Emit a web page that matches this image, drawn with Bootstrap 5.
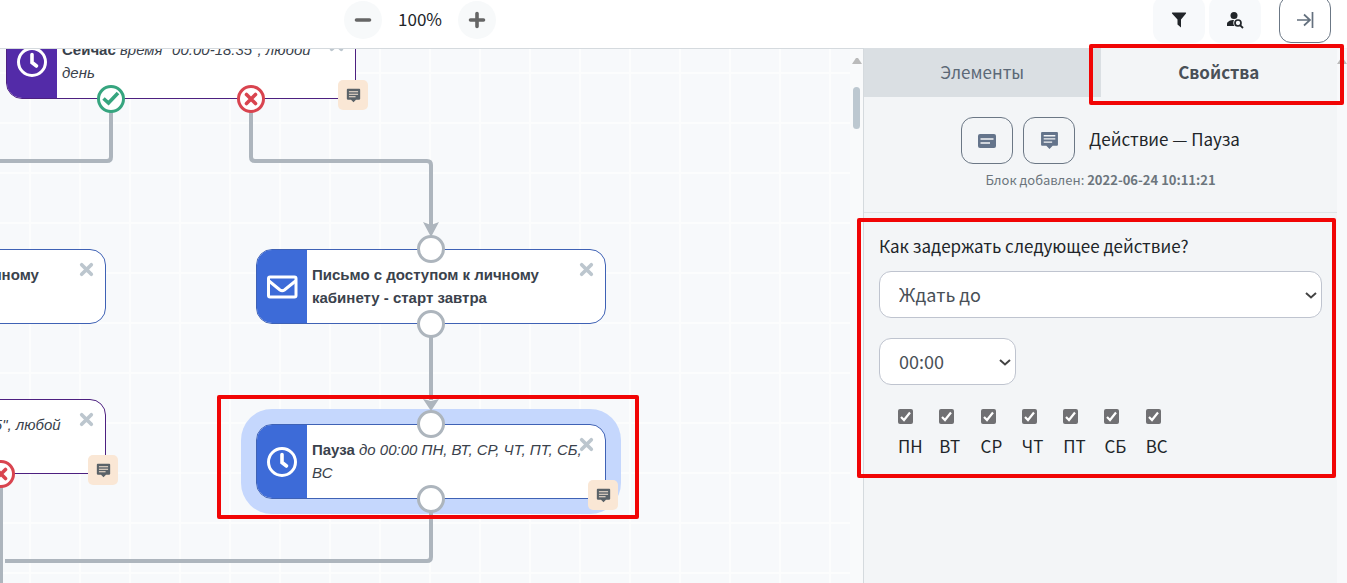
<!DOCTYPE html>
<html lang="ru">
<head>
<meta charset="utf-8">
<meta name="viewport" content="width=device-width, initial-scale=1">
<title>Редактор процесса</title>
<link rel="stylesheet" href="https://cdn.jsdelivr.net/npm/bootstrap@5.3.0/dist/css/bootstrap.min.css">
<style>
  body { font-family: "Noto Sans CJK SC", "Noto Sans", sans-serif; color: #212529; font-size: 17px; line-height: 24px; }
  .top-bar { height: 49px; padding-bottom: 9px; border-bottom: 1px solid #d5dade; flex: none; }
  .zoom-group { width: calc(100% - 507px); gap: 16px; }
  .zoom-btn { width: 38px; height: 38px; border-radius: 50%; background: #f7f9fa; border: 0; padding: 0; flex: none; }
  .zoom-value { padding-bottom: 2px; }
  .tool-btn { width: 52px; height: 47px; border-radius: 12px; padding: 0; flex: none; }
  .tool-soft { background: #f7f9fb; border: 0; }
  .tool-line { background: transparent; border: 1px solid #6b7785; }
  .tool-gap { margin-left: 14px; }
  button svg, .node svg { display: block; margin: auto; }

  .board { background-color: #f7f9fb; min-width: 0; }
  .board-grid { inset: 0 12px 0 0;
    background-image: linear-gradient(#fcfdfd 2px, transparent 2px), linear-gradient(90deg, #fcfdfd 2px, transparent 2px);
    background-size: 50px 50px; background-position: 29px 23px; }
  .wires { left: 0; top: 0; }
  .node { position: absolute; width: 350px; height: 75px; border: 1px solid #3f62b5; border-radius: 16px; background: #fff;
    font: 15px/23px "Liberation Sans", Arial, sans-serif; color: #3a424c; }
  .node-icon { width: 50px; flex: none; background: #3d6bd8; border-radius: 15px 0 0 15px; }
  .node-text { padding: 13px 0 0 5px; width: 276px; }
  .node-time { border-color: #4d2080; }
  .node-time .node-icon { background: #532ba8; }
  .node-active { box-shadow: 0 0 0 15px #c5d7fd; }
  .at-now { left: 6px; top: -25px; }
  .at-mail { left: 256px; top: 200px; }
  .at-pause { left: 256px; top: 375px; }
  .at-mail-left { left: -244px; top: 200px; }
  .at-now-left { left: -244px; top: 350px; }
  .node-close { position: absolute; right: 11px; top: 12px; border: 0; background: none; padding: 0; }
  .node-note { position: absolute; right: -13px; bottom: -12px; width: 30px; height: 30px; padding: 0; border: 0; border-radius: 5px; background: #fae7d5; z-index: 1; }
  .port { position: absolute; width: 28px; height: 28px; border: 3px solid #adb5bd; border-radius: 50%; background: #fff; }
  .port-in { left: 160px; top: -15px; }
  .port-out { left: 160px; bottom: -15px; }
  .port-yes { left: 90px; bottom: -15px; border-color: #36a57f; }
  .port-no { left: 230px; bottom: -15px; border-color: #d9444f; }
  .over-ports { width: 350px; height: 75px; border: 1px solid transparent; }
  .frame { position: absolute; border: 4px solid #f10505; border-radius: 2px; pointer-events: none; z-index: 3; }
  .frame-node { left: 217px; top: 346px; width: 422px; height: 124px; }
  .frame-tab { left: -12px; right: -7px; top: -4px; bottom: -8px; }
  .frame-form { left: -7px; right: 1px; top: 5px; bottom: 0; }
  .track { width: 13px; right: 0; top: 0; bottom: 0; background: #f9fafb; }
  .thumb { width: 7px; height: 42px; border-radius: 4px; background: #bdc8d0; margin: 23px auto 0; }
  .arrow-up { width: 10px; margin: 8px auto 0; display: block; }

  .side { width: 484px; flex: none; background: #f3f5f7; border-left: 1px solid #d5dade; padding-right: 10px; margin-top: -1px; }
  .side-track { position: absolute; right: 0; top: 1px; bottom: 0; width: 10px; background: #f8f9fb; }
  .side-tab { height: 49px; border: 0; background: none; color: #5c6977; font-size: 17px; padding: 0 0 2px; width: 100%; }
  .side-tab-off { background: #dadfe3; }
  .side-tab-on { font-weight: 700; color: #495057; }
  .block-head { padding: 20px 0 22px; border-bottom: 1px solid #e0e4e7; }
  .block-tools { gap: 10px; }
  .block-name { padding: 0 0 4px 4px; }
  .block-date { font-size: 13px; line-height: 20px; color: #6c757d; margin-top: 6px; }
  .block-form { padding: 21px 15px 20px; }
  .field-label { margin-bottom: 13px; }
  .field { height: 47px; border: 1px solid #bfc4cf; border-radius: 12px; padding: 0 30px 0 19px; color: #495057; font-size: 18px;
    background-position: right 3px center; background-size: 14px 14px;
    background-image: url("data:image/svg+xml,%3Csvg xmlns='http://www.w3.org/2000/svg' viewBox='0 0 14 14'%3E%3Cpath d='M2 5l5 4.500 5-4.500' fill='none' stroke='%23444' stroke-width='2'/%3E%3C/svg%3E"); }
  .field-time { width: 137px; margin-top: 20px; }
  .days { width: 289px; margin-left: 19px; grid-template-columns: repeat(7, 1fr); }
  .days label { margin-top: 10px; }
  .days .form-check-input { width: 15px; height: 15px; margin: 0; border-radius: 2px; display: block; border: 0; }
  .days .form-check-input:checked { background-color: #707073;
    background-image: url("data:image/svg+xml,%3Csvg xmlns='http://www.w3.org/2000/svg' viewBox='0 0 15 15'%3E%3Cpath d='M3 8l3 3 6-7.500' fill='none' stroke='%23fff' stroke-width='2.200'/%3E%3C/svg%3E"); }
</style>
</head>
<body>
<svg class="d-none">
  <symbol id="i-note" viewBox="0 0 18 18"><path fill="currentColor" d="M2 1h14a1 1 0 0 1 1 1v11a1 1 0 0 1-1 1h-4l-3 3-3-3H2a1 1 0 0 1-1-1V2a1 1 0 0 1 1-1z"/><path d="M3.500 4.500h11M3.500 7.500h11M3.500 10.500h8" stroke="var(--hole)" stroke-width="1.300"/></symbol>
  <symbol id="i-x" viewBox="0 0 14 14"><path d="M2.500 2.500l9 9M11.500 2.500l-9 9" stroke="currentColor" stroke-width="3.400" stroke-linecap="round"/></symbol>
  <symbol id="i-clock" viewBox="0 0 32 32"><circle cx="16" cy="16" r="13.500" fill="none" stroke="#fff" stroke-width="3"/><path d="M16 8.500v8l4.500 3.500" fill="none" stroke="#fff" stroke-width="3.600" stroke-linecap="round"/></symbol>
  <symbol id="i-mail" viewBox="0 0 32 24"><rect x="2.500" y="2" width="27.500" height="20" rx="1.500" fill="none" stroke="#fff" stroke-width="3"/><path d="M3 6l11 9q2.200 1.600 4.400 0L29.500 6" fill="none" stroke="#fff" stroke-width="3"/></symbol>
</svg>

<div class="vh-100 d-flex flex-column overflow-hidden">
  <header class="top-bar d-flex align-items-center justify-content-between bg-white overflow-hidden">
    <div class="zoom-group d-flex align-items-center justify-content-center">
      <button class="zoom-btn" type="button" aria-label="Уменьшить"><svg width="18" height="18"><path d="M2.500 9h13" stroke="#666" stroke-width="3.600" stroke-linecap="round"/></svg></button>
      <span class="zoom-value">100%</span>
      <button class="zoom-btn" type="button" aria-label="Увеличить"><svg width="18" height="18"><path d="M2.500 9h13M9 2.500v13" stroke="#666" stroke-width="3.600" stroke-linecap="round"/></svg></button>
    </div>
    <div class="d-flex gap-1 pe-3">
      <button class="tool-btn tool-soft" type="button" aria-label="Фильтр"><svg width="16" height="18"><path d="M1.500 1.500h13q1 0 .5 1L10 8.500v8L6.500 13.500v-5L1 2.500q-.5-1 .5-1z" fill="#212529"/></svg></button>
      <button class="tool-btn tool-soft" type="button" aria-label="Поиск контакта"><svg width="18" height="18"><circle cx="8" cy="4.500" r="3.500" fill="#212529"/><path d="M1 15v-2c0-2.500 3.500-4 7-4-1 2-1 4.500.5 6z" fill="#212529"/><circle cx="12" cy="12" r="3" fill="none" stroke="#212529" stroke-width="1.700"/><path d="M14.300 14.300l2.700 2.700" stroke="#212529" stroke-width="1.800"/></svg></button>
      <button class="tool-btn tool-line tool-gap" type="button" aria-label="Свернуть панель"><svg width="18" height="18"><path d="M1 9h13M8 3.500L14 9l-6 5.500M16.500 1v16" fill="none" stroke="#64707e" stroke-width="1.700"/></svg></button>
    </div>
  </header>

  <div class="d-flex flex-grow-1">
    <main class="board position-relative flex-grow-1">
      <div class="position-absolute w-100 h-100 overflow-hidden">
        <div class="board-grid position-absolute"></div>
        <div class="node node-active at-pause d-flex">
          <div class="node-icon d-flex"><svg width="32" height="32"><use href="#i-clock"/></svg></div>
          <div class="node-text"><b>Пауза</b> <i>до 00:00 ПН, ВТ, СР, ЧТ, ПТ, СБ, ВС</i></div>
          <button class="node-close" type="button" aria-label="Удалить"><svg width="15" height="15" color="#bcc6ce"><use href="#i-x"/></svg></button>
          <button class="node-note" type="button" aria-label="Заметка"><svg width="15" height="15" color="#5a6268" style="--hole:#fae7d5"><use href="#i-note"/></svg></button>
        </div>
        <svg class="wires position-absolute" width="851" height="534" fill="none" stroke="#adb5bd" stroke-width="4">
          <path d="M111 60v48q0 4-4 4H-4M251 60v48q0 4 4 4h172q4 0 4 4v66M431 275v76M431 460v48q0 4-4 4H5M1 430v110"/>
          <g fill="#adb5bd" stroke="none"><path d="M423 173l8 3 8-3-8 15zM423 350l8 2 8-2-8 12z"/></g>
        </svg>
        <div class="node node-time at-now d-flex">
          <div class="node-icon d-flex"><svg width="32" height="32"><use href="#i-clock"/></svg></div>
          <div class="node-text"><b>Сейчас</b> <i>время "00:00-18:35", любой день</i></div>
          <button class="node-close" type="button" aria-label="Удалить"><svg width="15" height="15" color="#bcc6ce"><use href="#i-x"/></svg></button>
          <span class="port port-yes"><svg width="22" height="22" fill="none"><path d="M3.500 10.500l5 4.500 9.500-10" stroke="#36a57f" stroke-width="3.600"/></svg></span>
          <span class="port port-no"><svg width="22" height="22"><path d="M6.500 6.500l9 9M15.500 6.500l-9 9" stroke="#d9444f" stroke-width="3.600" stroke-linecap="round"/></svg></span>
          <button class="node-note" type="button" aria-label="Заметка"><svg width="15" height="15" color="#5a6268" style="--hole:#fae7d5"><use href="#i-note"/></svg></button>
        </div>
        <div class="node at-mail d-flex">
          <div class="node-icon d-flex"><svg width="32" height="24"><use href="#i-mail"/></svg></div>
          <div class="node-text"><b>Письмо с доступом к личному кабинету - старт завтра</b></div>
          <button class="node-close" type="button" aria-label="Удалить"><svg width="15" height="15" color="#bcc6ce"><use href="#i-x"/></svg></button>
          <span class="port port-in"></span><span class="port port-out"></span>
        </div>
        <div class="node at-mail-left d-flex">
          <div class="node-icon d-flex"><svg width="32" height="24"><use href="#i-mail"/></svg></div>
          <div class="node-text"><b>Письмо с доступом к личному кабинету</b></div>
          <button class="node-close" type="button" aria-label="Удалить"><svg width="15" height="15" color="#bcc6ce"><use href="#i-x"/></svg></button>
        </div>
        <div class="node node-time at-now-left d-flex">
          <div class="node-icon d-flex"><svg width="32" height="32"><use href="#i-clock"/></svg></div>
          <div class="node-text"><b>Сейчас</b> <i>время "00:00-18:35", любой день</i></div>
          <button class="node-close" type="button" aria-label="Удалить"><svg width="15" height="15" color="#bcc6ce"><use href="#i-x"/></svg></button>
          <span class="port port-no"><svg width="22" height="22"><path d="M6.500 6.500l9 9M15.500 6.500l-9 9" stroke="#d9444f" stroke-width="3.600" stroke-linecap="round"/></svg></span>
          <button class="node-note" type="button" aria-label="Заметка"><svg width="15" height="15" color="#5a6268" style="--hole:#fae7d5"><use href="#i-note"/></svg></button>
        </div>
        <!-- ports of the selected block stay above its outgoing wire -->
        <div class="over-ports at-pause position-absolute"><span class="port port-in"></span><span class="port port-out"></span></div>
        <div class="track position-absolute">
          <svg class="arrow-up" width="10" height="7"><path d="M0 7l4-6h2l4 6z" fill="#bbb"/></svg>
          <div class="thumb"></div>
        </div>
        <div class="frame frame-node"></div>
      </div>
    </main>

    <aside class="side position-relative">
      <div class="side-track"><svg class="arrow-up" width="10" height="7"><path d="M0 7l4-6h2l4 6z" fill="#bbb"/></svg></div>
      <div class="d-flex">
        <div class="w-50"><button class="side-tab side-tab-off" type="button">Элементы</button></div>
        <div class="w-50 position-relative"><button class="side-tab side-tab-on" type="button">Свойства</button><div class="frame frame-tab"></div></div>
      </div>
      <section class="block-head text-center">
        <div class="block-tools d-flex justify-content-center align-items-center">
          <button class="tool-btn tool-line" type="button" aria-label="Описание"><svg width="18" height="14"><rect width="18" height="14" rx="2" fill="#64748b"/><path d="M2.500 5h13M2.500 9h9.500" stroke="#f3f5f7" stroke-width="1.500"/></svg></button>
          <button class="tool-btn tool-line" type="button" aria-label="Заметка"><svg width="19" height="19" color="#64748b" style="--hole:#f3f5f7"><use href="#i-note"/></svg></button>
          <span class="block-name">Действие — Пауза</span>
        </div>
        <div class="block-date">Блок добавлен: <b>2022-06-24 10:11:21</b></div>
      </section>
      <form class="block-form position-relative">
        <div class="frame frame-form"></div>
        <label for="mode" class="field-label d-block">Как задержать следующее действие?</label>
        <select id="mode" class="form-select field"><option>Ждать до</option></select>
        <select class="form-select field field-time" aria-label="Время"><option>00:00</option></select>
        <div class="days d-grid mt-4">
          <div><input class="form-check-input" type="checkbox" id="d1" checked><label for="d1">ПН</label></div>
          <div><input class="form-check-input" type="checkbox" id="d2" checked><label for="d2">ВТ</label></div>
          <div><input class="form-check-input" type="checkbox" id="d3" checked><label for="d3">СР</label></div>
          <div><input class="form-check-input" type="checkbox" id="d4" checked><label for="d4">ЧТ</label></div>
          <div><input class="form-check-input" type="checkbox" id="d5" checked><label for="d5">ПТ</label></div>
          <div><input class="form-check-input" type="checkbox" id="d6" checked><label for="d6">СБ</label></div>
          <div><input class="form-check-input" type="checkbox" id="d7" checked><label for="d7">ВС</label></div>
        </div>
      </form>
    </aside>
  </div>
</div>
<script src="https://cdn.jsdelivr.net/npm/bootstrap@5.3.0/dist/js/bootstrap.bundle.min.js"></script>
</body>
</html>
